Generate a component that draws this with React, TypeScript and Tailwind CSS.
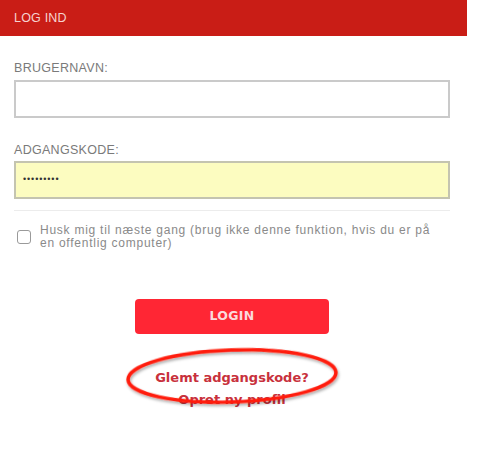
import React from 'react';

const App: React.FC = () => {
  return (
    <div className="w-[487px] h-[451px] bg-white font-['Liberation_Sans',sans-serif] relative">
      <div className="w-[467px] h-[36px] bg-[#c91d16] flex items-center px-[14px]">
        <span className="text-[12.5px] text-[#f6d2d0] tracking-[0.2px]">LOG IND</span>
      </div>

      <div className="px-[14px] w-[464px]">
        <label className="block mt-[25px] text-[12.5px] text-[#7a7a7a] leading-[14px] tracking-[0.3px]">BRUGERNAVN:</label>
        <div className="mt-[5px] h-[38px] border-2 border-[#cacaca] bg-white"></div>

        <label className="block mt-[25px] text-[12.5px] text-[#7a7a7a] leading-[14px] tracking-[0.3px]">ADGANGSKODE:</label>
        <div className="mt-[4px] h-[38px] border-2 border-[#c4c4b0] bg-[#fcfcc0] flex items-center px-[7px]">
          <span className="text-[9px] text-[#333] tracking-[0.9px]">•••••••••</span>
        </div>

        <div className="mt-[11px] border-t border-[#ececec]"></div>

        <div className="flex items-start mt-[13px]">
          <div className="mt-[6px] ml-[3px] w-[14px] h-[14px] border border-[#9a9a9a] rounded-[3px] shrink-0"></div>
          <p className="ml-[9px] w-[398px] text-[12px] leading-[13px] text-[#8a8a8a] tracking-[0.75px]">
            Husk mig til næste gang (brug ikke denne funktion, hvis du er på en offentlig computer)
          </p>
        </div>

        <div className="flex justify-center mt-[49px]">
          <button className="w-[194px] h-[35px] rounded-[4px] bg-[#ff2634] text-[#fbd9dc] font-bold text-[12.5px] tracking-wide font-['DejaVu_Sans',sans-serif]">
            LOGIN
          </button>
        </div>

        <div className="flex flex-col items-center mt-[33px] font-['DejaVu_Sans',sans-serif] font-bold text-[13px] text-[#c8313c] leading-[22px]">
          <span>Glemt adgangskode?</span>
          <span>Opret ny profil</span>
        </div>
      </div>

      <svg className="absolute left-0 top-0 pointer-events-none" width="487" height="451">
        <defs>
          <filter id="sh" x="-10%" y="-30%" width="120%" height="160%">
            <feDropShadow dx="1" dy="2" stdDeviation="1.5" floodColor="#000" floodOpacity="0.35" />
          </filter>
        </defs>
        <ellipse cx="232" cy="376" rx="104" ry="26" fill="none" stroke="#ff1a0a" strokeWidth="3.5" filter="url(#sh)" transform="rotate(-2 232 376)" />
      </svg>
    </div>
  );
};

export default App;
